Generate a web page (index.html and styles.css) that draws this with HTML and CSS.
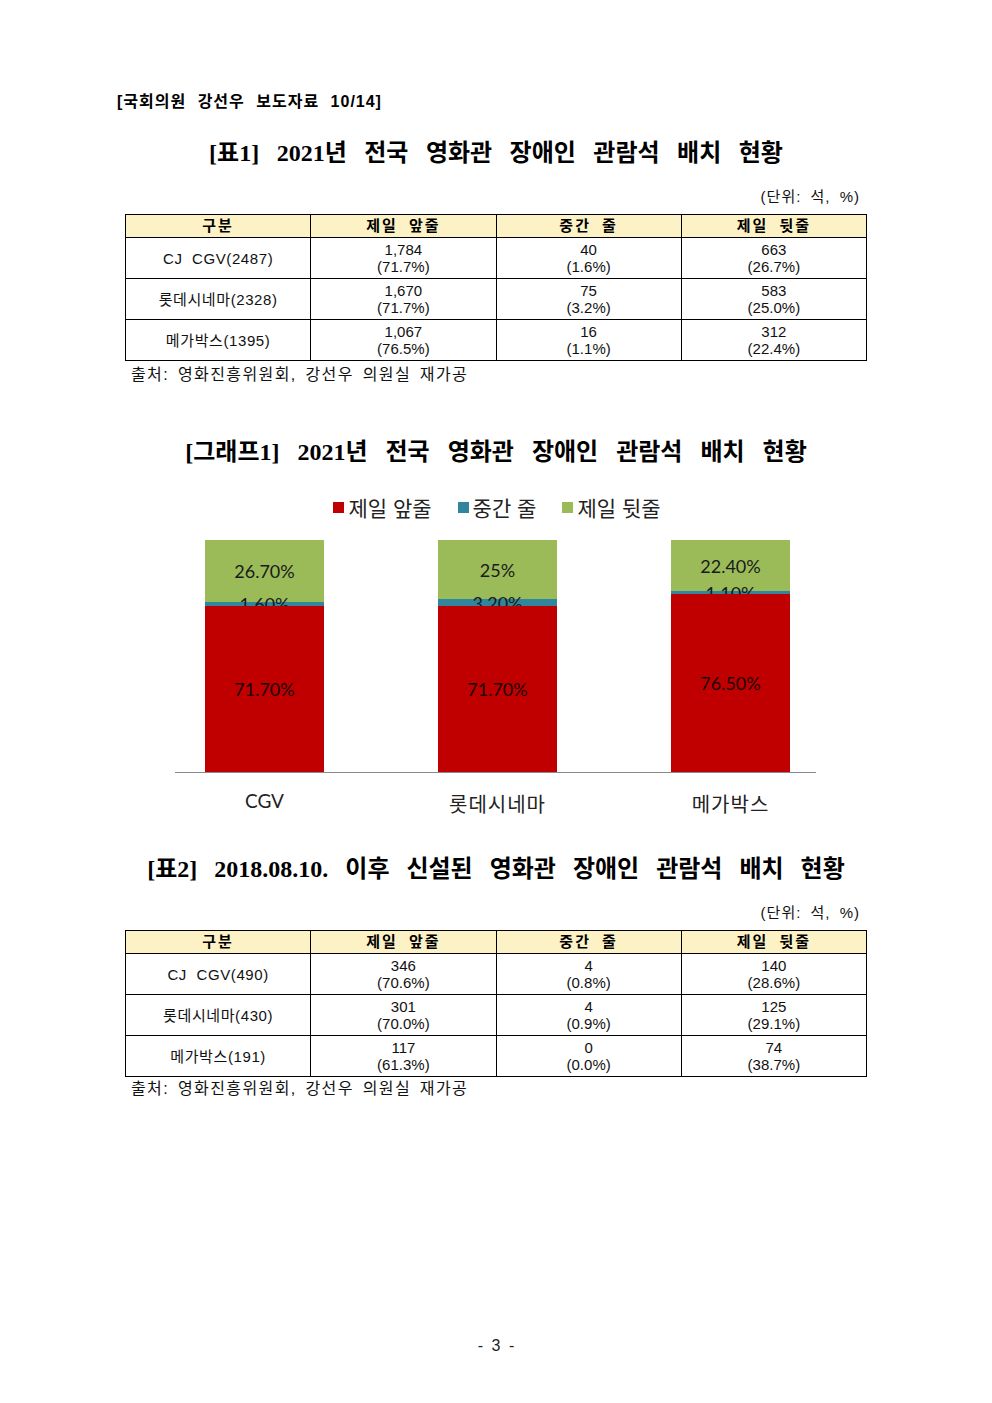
FILE: index.html
```html
<!DOCTYPE html>
<html lang="ko">
<head>
<meta charset="utf-8">
<title>보도자료</title>
<link rel="stylesheet" href="styles.css">
</head>
<body>
<div class="page">
  <div class="doc-head">[국회의원 강선우 보도자료 10/14]</div>

  <h1 class="title title-1">[표1] 2021년 전국 영화관 장애인 관람석 배치 현황</h1>
  <div class="unit">(단위: 석, %)</div>
  <table class="data">
    <thead>
      <tr><th>구분</th><th>제일 앞줄</th><th>중간 줄</th><th>제일 뒷줄</th></tr>
    </thead>
    <tbody>
      <tr><td>CJ&nbsp; CGV(2487)</td><td>1,784<br>(71.7%)</td><td>40<br>(1.6%)</td><td>663<br>(26.7%)</td></tr>
      <tr><td>롯데시네마(2328)</td><td>1,670<br>(71.7%)</td><td>75<br>(3.2%)</td><td>583<br>(25.0%)</td></tr>
      <tr><td>메가박스(1395)</td><td>1,067<br>(76.5%)</td><td>16<br>(1.1%)</td><td>312<br>(22.4%)</td></tr>
    </tbody>
  </table>
  <div class="source">출처: 영화진흥위원회, 강선우 의원실 재가공</div>

  <h1 class="title title-2">[그래프1] 2021년 전국 영화관 장애인 관람석 배치 현황</h1>
  <div class="legend">
    <span class="legend-item"><i class="sw sw-red"></i>제일 앞줄</span>
    <span class="legend-item"><i class="sw sw-blue"></i>중간 줄</span>
    <span class="legend-item"><i class="sw sw-green"></i>제일 뒷줄</span>
  </div>
  <div class="chart">
    <div class="plot">
      <div class="bar">
        <div class="seg seg-green" style="height:62px">26.70%</div>
        <div class="seg seg-blue" style="height:4px"><span class="mid-label">1.60%</span></div>
        <div class="seg seg-red" style="height:166px">71.70%</div>
      </div>
      <div class="bar">
        <div class="seg seg-green" style="height:59px">25%</div>
        <div class="seg seg-blue" style="height:7px"><span class="mid-label">3.20%</span></div>
        <div class="seg seg-red" style="height:166px">71.70%</div>
      </div>
      <div class="bar">
        <div class="seg seg-green" style="height:51px">22.40%</div>
        <div class="seg seg-blue" style="height:3px"><span class="mid-label">1.10%</span></div>
        <div class="seg seg-red" style="height:178px">76.50%</div>
      </div>
    </div>
    <div class="cats">
      <div class="cat cat-latin">CGV</div>
      <div class="cat cat-ko">롯데시네마</div>
      <div class="cat cat-ko">메가박스</div>
    </div>
  </div>

  <h1 class="title title-3">[표2] 2018.08.10. 이후 신설된 영화관 장애인 관람석 배치 현황</h1>
  <div class="unit unit-2">(단위: 석, %)</div>
  <table class="data">
    <thead>
      <tr><th>구분</th><th>제일 앞줄</th><th>중간 줄</th><th>제일 뒷줄</th></tr>
    </thead>
    <tbody>
      <tr><td>CJ&nbsp; CGV(490)</td><td>346<br>(70.6%)</td><td>4<br>(0.8%)</td><td>140<br>(28.6%)</td></tr>
      <tr><td>롯데시네마(430)</td><td>301<br>(70.0%)</td><td>4<br>(0.9%)</td><td>125<br>(29.1%)</td></tr>
      <tr><td>메가박스(191)</td><td>117<br>(61.3%)</td><td>0<br>(0.0%)</td><td>74<br>(38.7%)</td></tr>
    </tbody>
  </table>
  <div class="source source-2">출처: 영화진흥위원회, 강선우 의원실 재가공</div>

  <div class="page-no">- 3 -</div>
</div>
</body>
</html>
```

FILE: styles.css
```css
html, body {
  margin: 0;
  padding: 0;
  background: #ffffff;
}
body {
  font-family: "Liberation Sans", "Noto Sans CJK KR", sans-serif;
  color: #000000;
}
.page {
  width: 992px;
  height: 1403px;
  box-sizing: border-box;
  padding-top: 92px;
  overflow: hidden;
}
.doc-head {
  margin-left: 117px;
  font-size: 16px;
  line-height: 20px;
  font-weight: bold;
  letter-spacing: 1px;
  word-spacing: 6px;
}
.title {
  margin: 0;
  text-align: center;
  font-family: "Liberation Serif", "Noto Sans CJK KR", serif;
  font-weight: bold;
  font-size: 24px;
  line-height: 32px;
  word-spacing: 12px;
}
.title-1 { margin-top: 25px; word-spacing: 11.5px; }
.title-2 { margin-top: 52px; word-spacing: 12px; }
.title-3 { margin-top: 37px; word-spacing: 11px; }
.unit {
  width: 860px;
  margin-top: 19px;
  text-align: right;
  font-size: 15px;
  line-height: 18px;
  color: #111;
  letter-spacing: 1px;
  word-spacing: 4px;
}
.data {
  margin-top: 8px;
  margin-left: 125px;
  width: 742px;
  table-layout: fixed;
  border-collapse: collapse;
  font-size: 15px;
}
.data th, .data td {
  border: 1px solid #000;
  padding: 0;
  text-align: center;
  vertical-align: middle;
}
.data th {
  height: 22px;
  background: #fdf2c6;
  font-weight: bold;
  line-height: 20px;
  letter-spacing: 2px;
  word-spacing: 5px;
}
.data td {
  height: 40px;
  line-height: 17px;
  color: #111;
}
.data td:first-child {
  letter-spacing: 0.6px;
}
.source {
  margin-left: 131px;
  margin-top: 5px;
  font-size: 16px;
  line-height: 18px;
  letter-spacing: 1.4px;
  word-spacing: 3px;
  color: #111;
}
.source-2 { margin-top: 3px; }

.legend {
  margin-top: 26px;
  display: flex;
  justify-content: center;
  gap: 26px;
  padding-left: 2px;
  font-family: "Noto Sans CJK KR", sans-serif;
  font-size: 21px;
  line-height: 26px;
  color: #222;
}
.legend-item {
  display: flex;
  align-items: center;
}
.sw {
  display: inline-block;
  width: 11px;
  height: 11px;
  margin-right: 4px;
}
.sw-red { background: #c00000; }
.sw-blue { background: #31859c; }
.sw-green { background: #9bbb59; }

.chart {
  margin-top: 20px;
}
.plot {
  margin-left: 175px;
  width: 641px;
  height: 233px;
  box-sizing: border-box;
  border-bottom: 1px solid #8a8a8a;
  display: flex;
  align-items: flex-end;
  gap: 114px;
  padding-left: 30px;
}
.bar {
  width: 119px;
  height: 232px;
  display: flex;
  flex-direction: column;
}
.seg {
  display: flex;
  align-items: center;
  justify-content: center;
  font-family: "Lato", "Liberation Sans", sans-serif;
  font-size: 18px;
  color: #1a1a1a;
  position: relative;
}
.seg-green { background: #9bbb59; }
.seg-blue { background: #31859c; }
.seg-red { background: #c00000; color: #1a0000; }
.mid-label {
  position: absolute;
  left: 0;
  right: 0;
  top: 50%;
  transform: translateY(-50%);
  text-align: center;
  line-height: 20px;
  color: #1a1a1a;
}
.cats {
  margin-top: 16px;
  margin-left: 185px;
  display: flex;
  gap: 74px;
}
.cat {
  width: 159px;
  text-align: center;
  font-size: 20px;
  line-height: 24px;
  color: #222;
}
.cat-latin { font-family: "Lato", "Liberation Sans", sans-serif; font-size: 19px; }
.cat-ko { font-family: "Noto Sans CJK KR", sans-serif; padding-top: 3px; letter-spacing: 1px; }

.page-no {
  margin-top: 238px;
  text-align: center;
  font-size: 16px;
  line-height: 20px;
  word-spacing: 4px;
  color: #222;
}
```
